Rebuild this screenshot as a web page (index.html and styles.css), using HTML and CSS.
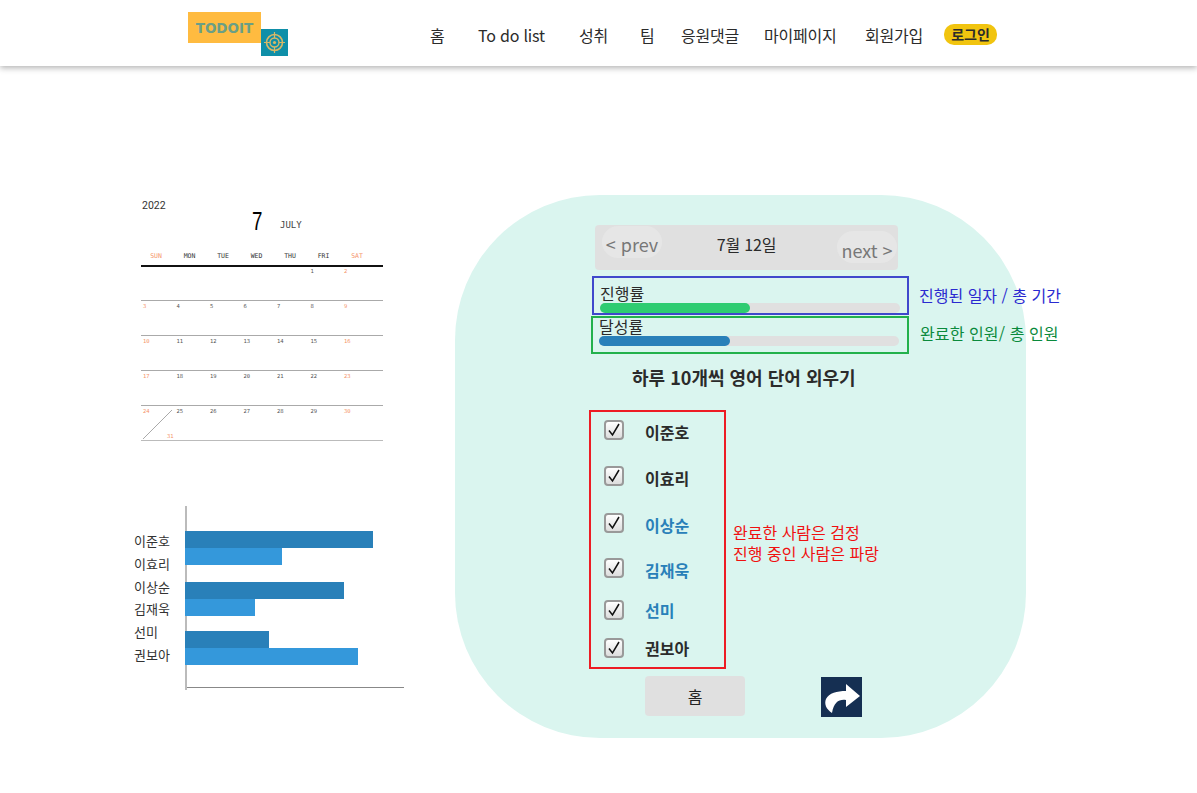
FILE: index.html
```html
<!DOCTYPE html>
<html lang="ko">
<head>
    <meta charset="utf-8">
    <title>TODOIT</title>
    <link rel="stylesheet" href="styles.css">
</head>
<body>
    <header class="top">
        <div class="logo">
            <div class="logo-name">TODOIT</div>
            <div class="logo-mark">
                <svg width="27" height="27" viewBox="0 0 27 27" fill="none" stroke="#d8b866">
                    <circle cx="13.5" cy="13.5" r="8" stroke-width="1.6"/>
                    <circle cx="13.5" cy="13.5" r="4.5" stroke-width="1.4"/>
                    <circle cx="13.5" cy="13.5" r="1.6" fill="#d8b866" stroke="none"/>
                    <path d="M13.5 3V9M13.5 18V24M3 13.5H9M18 13.5H24" stroke-width="1.2"/>
                </svg>
            </div>
        </div>
        <nav class="menu">
            <a>홈</a>
            <a>To do list</a>
            <a>성취</a>
            <a>팀</a>
            <a>응원댓글</a>
            <a>마이페이지</a>
            <a>회원가입</a>
            <a class="login">로그인</a>
        </nav>
    </header>

    <main class="page">
        <aside class="side">
            <section class="cal">
                <div class="cal-head">
                    <div class="cal-year">2022</div>
                    <div class="cal-num">7</div>
                    <div class="cal-month">JULY</div>
                </div>
                <div class="cal-days">
                    <span class="red">SUN</span><span>MON</span><span>TUE</span><span>WED</span><span>THU</span><span>FRI</span><span class="red">SAT</span>
                </div>
                <div class="cal-week first">
                    <span></span><span></span><span></span><span></span><span></span><span>1</span><span class="red">2</span>
                </div>
                <div class="cal-week">
                    <span class="red">3</span><span>4</span><span>5</span><span>6</span><span>7</span><span>8</span><span class="red">9</span>
                </div>
                <div class="cal-week">
                    <span class="red">10</span><span>11</span><span>12</span><span>13</span><span>14</span><span>15</span><span class="red">16</span>
                </div>
                <div class="cal-week">
                    <span class="red">17</span><span>18</span><span>19</span><span>20</span><span>21</span><span>22</span><span class="red">23</span>
                </div>
                <div class="cal-week last">
                    <span class="red split">24
                        <svg class="slash" width="31" height="31" viewBox="0 0 31 31"><path d="M1 30L30 1" stroke="#aaa" stroke-width="1"/></svg>
                        <b class="extra">31</b>
                    </span>
                    <span>25</span><span>26</span><span>27</span><span>28</span><span>29</span><span class="red">30</span>
                </div>
            </section>

            <section class="chart">
                <div class="chart-names">
                    <div>이준호</div>
                    <div>이효리</div>
                    <div>이상순</div>
                    <div>김재욱</div>
                    <div>선미</div>
                    <div>권보아</div>
                </div>
                <div class="plot">
                    <div class="bar dark" style="width: 188px"></div>
                    <div class="bar light" style="width: 97px"></div>
                    <div class="bar dark gap1" style="width: 159px"></div>
                    <div class="bar light" style="width: 70px"></div>
                    <div class="bar dark gap2" style="width: 84px"></div>
                    <div class="bar light" style="width: 173px"></div>
                </div>
            </section>
        </aside>

        <section class="blob">
            <div class="date-nav">
                <a class="prev">&lt; prev</a>
                <div class="date-now">7월 12일</div>
                <a class="next">next &gt;</a>
            </div>

            <div class="stat-row">
                <div class="stat stat-blue">
                    <div class="stat-label">진행률</div>
                    <div class="track"><div class="fill fill-green" style="width: 150px"></div></div>
                </div>
                <div class="note note-blue">진행된 일자 / 총 기간</div>
            </div>
            <div class="stat-row next-row">
                <div class="stat stat-green">
                    <div class="stat-label">달성률</div>
                    <div class="track"><div class="fill fill-blue" style="width: 131px"></div></div>
                </div>
                <div class="note note-green">완료한 인원/ 총 인원</div>
            </div>

            <h2 class="goal">하루 10개씩 영어 단어 외우기</h2>

            <div class="member-row">
                <ul class="members">
                    <li><span class="check"><svg width="16" height="16" viewBox="0 0 16 16"><path d="M3 8.5L6.5 13L13 2" fill="none" stroke="#111" stroke-width="1.5"/></svg></span><span class="who">이준호</span></li>
                    <li><span class="check"><svg width="16" height="16" viewBox="0 0 16 16"><path d="M3 8.5L6.5 13L13 2" fill="none" stroke="#111" stroke-width="1.5"/></svg></span><span class="who">이효리</span></li>
                    <li><span class="check"><svg width="16" height="16" viewBox="0 0 16 16"><path d="M3 8.5L6.5 13L13 2" fill="none" stroke="#111" stroke-width="1.5"/></svg></span><span class="who doing">이상순</span></li>
                    <li><span class="check"><svg width="16" height="16" viewBox="0 0 16 16"><path d="M3 8.5L6.5 13L13 2" fill="none" stroke="#111" stroke-width="1.5"/></svg></span><span class="who doing">김재욱</span></li>
                    <li><span class="check"><svg width="16" height="16" viewBox="0 0 16 16"><path d="M3 8.5L6.5 13L13 2" fill="none" stroke="#111" stroke-width="1.5"/></svg></span><span class="who doing level">선미</span></li>
                    <li><span class="check"><svg width="16" height="16" viewBox="0 0 16 16"><path d="M3 8.5L6.5 13L13 2" fill="none" stroke="#111" stroke-width="1.5"/></svg></span><span class="who level">권보아</span></li>
                </ul>
                <div class="note-red">완료한 사람은 검정<br>진행 중인 사람은 파랑</div>
            </div>

            <div class="actions">
                <button class="home-btn">홈</button>
                <a class="share">
                    <svg width="41" height="40" viewBox="0 0 41 40"><path d="M25 7L39 19L25 30V23C18 22 13 25 11 36C5 32 3 27 5 22C8 16 16 14 25 14Z" fill="#fff"/></svg>
                </a>
            </div>
        </section>
    </main>
</body>
</html>
```

FILE: styles.css
```css
* {
    box-sizing: border-box;
}
body {
    margin: 0;
    background: #fff;
    color: #2b2b2b;
    font-family: "Noto Sans CJK KR", "Noto Sans", sans-serif;
    font-size: 16px;
}

/* header */
.top {
    display: flex;
    height: 66px;
    padding-left: 188px;
    background: #fff;
    box-shadow: 0 2px 6px rgba(0, 0, 0, 0.3);
}
.logo {
    display: flex;
    align-items: flex-start;
    padding-top: 12px;
}
.logo-name {
    width: 73px;
    height: 31px;
    padding-top: 2px;
    background: #ffbb40;
    color: #6a9f86;
    font-family: "DejaVu Sans", sans-serif;
    font-size: 13.5px;
    font-weight: bold;
    line-height: 29px;
    text-align: center;
}
.logo-mark {
    display: flex;
    width: 27px;
    height: 27px;
    margin-top: 17px;
    background: #0f8fa8;
}
.menu {
    display: grid;
    grid-template-columns: 48px 101px 61px 41px 83px 101px 79px 53px;
    align-items: center;
    height: 69px;
    margin-left: 142px;
    letter-spacing: -0.2px;
    line-height: 24px;
}
.login {
    height: 21px;
    border-radius: 10px;
    background: #f1c40f;
    font-size: 14px;
    font-weight: bold;
    letter-spacing: 0;
    line-height: 20px;
    text-align: center;
}

/* page */
.page {
    display: flex;
    padding: 129px 0 0 135px;
}
.side {
    width: 320px;
}

/* calendar */
.cal {
    width: 242px;
    margin-left: 6px;
    padding-top: 4px;
    font-family: "DejaVu Sans Mono", monospace;
    color: #555;
}
.cal-head {
    display: flex;
    height: 40px;
}
.cal-year {
    width: 111px;
    padding-left: 1px;
    color: #333;
    font-family: "Roboto", sans-serif;
    font-size: 10.5px;
    line-height: 14px;
}
.cal-num {
    width: 28px;
    margin-top: 9px;
    color: #000;
    font-family: "Liberation Sans", sans-serif;
    font-size: 25px;
    line-height: 26px;
    transform: scaleX(0.75);
    transform-origin: left;
}
.cal-month {
    margin-top: 20px;
    color: #444;
    font-size: 9px;
    line-height: 12px;
}
.cal-days,
.cal-week {
    display: grid;
    grid-template-columns: repeat(7, 33.5px);
}
.cal-days {
    padding: 11px 0 3px;
    border-bottom: 2px solid #111;
    color: #333;
    font-size: 6.5px;
    line-height: 12px;
}
.cal-days span {
    width: 30px;
    text-align: center;
}
.cal-week {
    height: 35px;
    padding: 1px 0 0 2px;
    border-top: 1px solid #aaa;
    font-size: 5.5px;
    line-height: 8px;
}
.cal-week.first {
    height: 33px;
    padding-top: 0;
    border-top: 0;
}
.cal-week.last {
    height: 36px;
    border-bottom: 1px solid #bbb;
}
.cal .red {
    color: #f5956a;
}
.split {
    position: relative;
}
.slash {
    position: absolute;
    left: -1px;
    top: 2px;
}
.extra {
    position: absolute;
    left: 24px;
    top: 25px;
    font-weight: normal;
}

/* chart */
.chart {
    display: flex;
    margin: 65px 0 0 -1px;
}
.chart-names {
    width: 51px;
    padding-top: 24px;
    color: #333;
    font-size: 13px;
    line-height: 22.8px;
}
.plot {
    position: relative;
    width: 219px;
    height: 182px;
    padding-top: 25px;
    border-bottom: 1px solid #888;
}
.plot::before {
    content: "";
    position: absolute;
    left: 0;
    top: 0;
    bottom: -3px;
    width: 2px;
    background: #bbb;
}
.bar {
    position: relative;
    height: 17px;
}
.dark {
    background: #2980b9;
}
.light {
    background: #3498db;
}
.gap1 {
    margin-top: 17px;
}
.gap2 {
    margin-top: 15px;
}

/* main panel */
.blob {
    width: 571px;
    height: 543px;
    padding: 30px 0 0 136px;
    border-radius: 145px;
    background: #daf5ef;
}
.date-nav {
    display: flex;
    justify-content: space-between;
    width: 303px;
    height: 45px;
    margin-left: 4px;
    padding: 1px 1px 0 7px;
    border-radius: 4px;
    background: #e0e0e0;
}
.prev,
.next {
    width: 60px;
    height: 32px;
    border-radius: 16px;
    background: #e6e6e6;
    color: #777;
    font-size: 18px;
    line-height: 38px;
    text-align: center;
    white-space: nowrap;
}
.prev {
    line-height: 37px;
}
.next {
    margin-top: 5px;
}
.date-now {
    margin: 6px 0 0 -6px;
    letter-spacing: -0.2px;
    line-height: 24px;
}
.stat-row {
    display: flex;
    align-items: center;
    margin-top: 6px;
}
.next-row {
    margin-top: 1px;
}
.stat {
    flex: none;
    width: 318px;
    padding-left: 6px;
    border: 2px solid;
    line-height: 20px;
}
.stat-blue {
    width: 317px;
    height: 39px;
    margin-left: 1px;
    padding-top: 5px;
    border-color: #3f48cc;
}
.stat-green {
    height: 38px;
    border-color: #22b14c;
    line-height: 18px;
}
.stat-green .stat-label {
    margin: -1px 0 1px;
}
.track {
    width: 300px;
    height: 10px;
    border-radius: 5px;
    background: #e0e0e0;
}
.fill {
    height: 10px;
    border-radius: 5px;
}
.fill-green {
    background: #2ecc71;
}
.fill-blue {
    background: #2980b9;
}
.note {
    margin: -2px 0 0 10px;
    line-height: 24px;
    white-space: nowrap;
}
.note-blue {
    color: #2a2ad0;
}
.note-green {
    margin: -4px 0 0 11px;
    color: #0a8a3c;
    letter-spacing: 0.1px;
}
.goal {
    margin: 11px 0 21px 41px;
    font-size: 18px;
    font-weight: bold;
    line-height: 24px;
}

/* members */
.member-row {
    display: flex;
    align-items: center;
    margin-left: -2px;
}
.members {
    display: grid;
    grid-template-rows: 46px 47px 45px 42px 38px 30px;
    flex: none;
    width: 137px;
    height: 259px;
    margin: 0;
    padding: 8px 0 0 13px;
    border: 2px solid #ed1c24;
    list-style: none;
}
.members li {
    display: flex;
    align-items: flex-start;
}
.check {
    display: flex;
    align-items: center;
    justify-content: center;
    width: 20px;
    height: 20px;
    border: 2px solid #999;
    border-radius: 4px;
    background: linear-gradient(#fff, #ddd);
}
.who {
    margin-left: 21px;
    font-weight: bold;
    line-height: 24px;
}
.who.level {
    margin-top: -2px;
}
.doing {
    color: #2980b9;
}
.note-red {
    margin: 6px 0 0 7px;
    color: #f01010;
    line-height: 21px;
    white-space: nowrap;
}
.actions {
    display: flex;
    margin: 7px 0 0 54px;
}
.home-btn {
    width: 100px;
    height: 40px;
    border: 0;
    border-radius: 4px;
    background: #e0e0e0;
    color: #222;
    font-family: inherit;
    font-size: 16px;
}
.share {
    display: flex;
    width: 41px;
    height: 40px;
    margin: 1px 0 0 76px;
    background: #152f52;
}
```
